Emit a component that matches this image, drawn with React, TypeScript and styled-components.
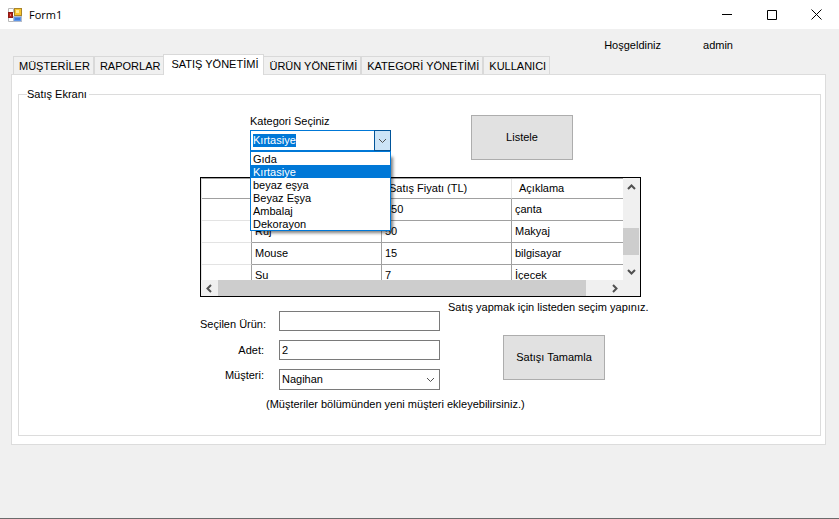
import React, { useEffect, useRef } from "react";
import styled, { createGlobalStyle } from "styled-components";

const GlobalStyle = createGlobalStyle`
  *, *::before, *::after { box-sizing: border-box; }
  html, body, #root { height: 100%; }
  body {
    margin: 0;
    background: #f0f0f0;
    color: #000;
    font: 11px/13px "Liberation Sans", Arial, sans-serif;
  }
  button, input, select { font: inherit; color: inherit; border-radius: 0; }
`;

const Window = styled.div`
  min-height: 100%;
  display: flex;
  flex-direction: column;
  border-bottom: 1px solid #6b6b6b;
`;

const TitleBar = styled.header`
  display: flex;
  align-items: center;
  height: 29px;
  padding-left: 8px;
  background: #fff;
`;

const Title = styled.h1`
  flex: 1;
  margin: 0 0 0 6px;
  font: 400 11px/16px "Open Sans", sans-serif;
`;

const CaptionButton = styled.button`
  display: grid;
  place-items: center;
  width: 45px;
  height: 28px;
  padding: 0;
  border: 0;
  background: transparent;
`;

const UserBar = styled.div`
  display: flex;
  justify-content: flex-end;
  gap: 42px;
  padding: 10px 106px 1px 0;
`;

const Tabs = styled.nav`
  display: flex;
  align-items: flex-end;
  height: 21px;
  margin: 0 13px;
`;

const Tab = styled.button<{ $active?: boolean }>`
  height: ${(p) => (p.$active ? 21 : 18)}px;
  margin: 0 ${(p) => (p.$active ? -1 : 0)}px ${(p) => (p.$active ? -1 : 0)}px ${(p) => (p.$active ? -1 : 0)}px;
  padding: ${(p) => (p.$active ? "0 5px 2px 7px" : "1px 3px 0 5px")};
  border: 1px solid #d9d9d9;
  border-bottom: 0;
  background: ${(p) => (p.$active ? "#fff" : "#f0f0f0")};
  white-space: nowrap;
  position: relative;
  z-index: ${(p) => (p.$active ? 1 : 0)};
  & + & { border-left-width: ${(p) => (p.$active ? 1 : 0)}px; }
`;

const Page = styled.main`
  margin: 0 13px 0 11px;
  padding: 13px 4px 8px 6px;
  border: 1px solid #dcdcdc;
  background: #fff;
`;

const Group = styled.fieldset`
  min-width: 0;
  min-height: 348px;
  margin: 0;
  padding: 14px 0 0 181px;
  border: 1px solid #dcdcdc;
`;

const Legend = styled.legend`
  margin-left: -173px;
  padding: 0 2px 0 0;
`;

const PickRow = styled.div`
  display: flex;
  align-items: flex-start;
  gap: 80px;
  padding-left: 50px;
`;

const Combo = styled.div`
  position: relative;
  width: 141px;
`;

const ComboLabel = styled.label`
  display: block;
  padding-bottom: 2px;
`;

const ComboBox = styled.div`
  display: flex;
  height: 21px;
  border: 1px solid #0078d7;
  background: #fff;
`;

const ComboInput = styled.input`
  flex: 1;
  min-width: 0;
  padding: 0 2px;
  border: 0;
  outline: 0;
  &::selection { background: #0078d7; color: #fff; }
`;

const ComboToggle = styled.button`
  display: grid;
  place-items: center;
  width: 17px;
  margin: -1px;
  padding: 0;
  border: 1px solid #005499;
  background: #cce4f7;
`;

const Options = styled.ul`
  position: absolute;
  z-index: 2;
  top: 100%;
  left: 0;
  right: 0;
  margin: 0;
  padding: 0;
  border: 1px solid #0078d7;
  background: #fff;
  box-shadow: 4px 4px 3px -2px rgba(0, 0, 0, 0.5);
  list-style: none;
`;

const Option = styled.li<{ $on: boolean }>`
  height: 13px;
  padding: 1px 2px 0;
  line-height: 13px;
  background: ${(p) => (p.$on ? "#0078d7" : "transparent")};
  color: ${(p) => (p.$on ? "#fff" : "#000")};
`;

const PushButton = styled.button`
  width: 102px;
  height: 45px;
  border: 1px solid #adadad;
  background: #e1e1e1;
`;

const DataGrid = styled.div`
  display: grid;
  grid-template-columns: minmax(0, 1fr) 17px;
  grid-template-rows: 102px 16px;
  width: 441px;
  max-width: 100%;
  margin-top: 17px;
  border: 1px solid #000;
`;

const Viewport = styled.div`
  overflow: hidden;
  border-top: 1px solid #a0a0a0;
  border-left: 1px solid #e3e3e3;
`;

const Table = styled.table`
  width: 100%;
  table-layout: fixed;
  border-spacing: 0;
  text-align: left;
`;

const HeadCell = styled.th<{ $width?: number }>`
  width: ${(p) => (p.$width ? `${p.$width}px` : "auto")};
  height: 20px;
  padding: 0 7px;
  border-right: 1px solid #e5e5e5;
  border-bottom: 1px solid #a0a0a0;
  font-weight: 400;
  &:last-child { border-right: 0; }
`;

const RowHead = styled.th`
  padding: 0;
  border-right: 1px solid #a0a0a0;
  border-bottom: 1px solid #e3e3e3;
`;

const Cell = styled.td`
  height: 22px;
  padding: 0 3px;
  border-right: 1px solid #a0a0a0;
  border-bottom: 1px solid #a0a0a0;
  &:last-child { border-right: 0; }
`;

const VerticalBar = styled.div`
  display: grid;
  grid-template-rows: 19px 31px 27px 8px 17px;
  padding-right: 1px;
  background: #f0f0f0;
`;

const HorizontalBar = styled.div`
  grid-column: 1 / -1;
  display: grid;
  grid-template-columns: 17px minmax(0, 1fr) 20px 17px 17px;
  background: #f0f0f0;
`;

const ScrollArrow = styled.button`
  display: grid;
  place-items: center;
  padding: 0;
  border: 0;
  background: transparent;
`;

const Thumb = styled.div`
  background: #cdcdcd;
`;

const SaleRow = styled.div`
  display: flex;
  align-items: flex-start;
  gap: 8px;
`;

const Fields = styled.div`
  display: grid;
  grid-template-columns: 64px 161px;
  column-gap: 15px;
  row-gap: 9px;
  padding-top: 14px;
`;

const FieldLabel = styled.label<{ $align: "start" | "center" | "end" }>`
  align-self: ${(p) => p.$align};
  text-align: right;
  white-space: nowrap;
`;

const TextBox = styled.input`
  min-width: 0;
  height: 20px;
  padding: 0 2px;
  border: 1px solid #7a7a7a;
  background: #fff;
`;

const SelectWrap = styled.div`
  display: grid;
  align-items: center;
  & > * { grid-area: 1 / 1; }
  & > svg { justify-self: end; margin-right: 5px; pointer-events: none; }
`;

const SelectBox = styled.select`
  appearance: none;
  height: 21px;
  padding: 0 2px;
  border: 1px solid #7a7a7a;
  background: #fff;
`;

const SaleSide = styled.div`
  display: flex;
  flex-direction: column;
  align-items: flex-start;
  gap: 21px;
  padding-top: 4px;
  & > button { margin-left: 55px; }
`;

const Note = styled.p`
  margin: 0;
  white-space: nowrap;
`;

const Hint = styled(Note)`
  padding: 8px 0 0 66px;
`;

const arrows = {
  down: "M1 3 L4.5 6.5 L8 3",
  up: "M1 6 L4.5 2.5 L8 6",
  left: "M6 1 L2.5 4.5 L6 8",
  right: "M3 1 L6.5 4.5 L3 8",
};

function Arrow({ to, weight = 1 }: { to: keyof typeof arrows; weight?: number }) {
  return (
    <svg width="9" height="9" viewBox="0 0 9 9" fill="none" stroke="#505050" strokeWidth={weight} aria-hidden="true">
      <path d={arrows[to]} />
    </svg>
  );
}

function FormIcon() {
  return (
    <svg width="15" height="14" viewBox="0 0 15 14" aria-hidden="true">
      <path d="M0.5 0.5h5v4h-5zM0.5 9.5h5v4h-5z" fill="#fff" stroke="#b8b8b8" />
      <rect x="5.5" y="8.5" width="8" height="5" fill="#5f97ea" stroke="#b4bccb" />
      <rect x="7" y="10" width="5" height="2" fill="#3f78d8" />
      <rect x="0.5" y="4.5" width="4" height="5" fill="#b32018" stroke="#8d1a14" />
      <rect x="2" y="6" width="1" height="2" fill="#ee8578" />
      <rect x="6.5" y="0.5" width="7" height="7" fill="#f7c52f" stroke="#a8842a" />
      <rect x="8" y="2" width="3" height="3" fill="#ffe795" />
    </svg>
  );
}

const tabs = ["MÜŞTERİLER", "RAPORLAR", "SATIŞ YÖNETİMİ", "ÜRÜN YÖNETİMİ", "KATEGORİ YÖNETİMİ", "KULLANICI"];
const categories = ["Gıda", "Kırtasiye", "beyaz eşya", "Beyaz Eşya", "Ambalaj", "Dekorayon"];
const products = [
  ["", "350", "çanta"],
  ["Ruj", "50", "Makyaj"],
  ["Mouse", "15", "bilgisayar"],
  ["Su", "7", "İçecek"],
];

export default function App() {
  const category = useRef<HTMLInputElement>(null);
  useEffect(() => {
    category.current?.focus();
    category.current?.select();
  }, []);

  return (
    <>
      <GlobalStyle />
      <Window>
        <TitleBar>
          <FormIcon />
          <Title>Form1</Title>
          <CaptionButton aria-label="Simge durumuna küçült">
            <svg width="10" height="11" stroke="#000"><path d="M0 5.5h10" /></svg>
          </CaptionButton>
          <CaptionButton aria-label="Ekranı kapla">
            <svg width="10" height="10" fill="none" stroke="#000"><path d="M.5 .5h9v9h-9z" /></svg>
          </CaptionButton>
          <CaptionButton aria-label="Kapat">
            <svg width="11" height="11" stroke="#000"><path d="M.5 .5l10 10M10.5 .5l-10 10" /></svg>
          </CaptionButton>
        </TitleBar>
        <UserBar>
          <span>Hoşgeldiniz</span>
          <span>admin</span>
        </UserBar>
        <Tabs role="tablist">
          {tabs.map((t, i) => (
            <Tab key={t} role="tab" aria-selected={i === 2} $active={i === 2}>{t}</Tab>
          ))}
        </Tabs>
        <Page>
          <Group>
            <Legend>Satış Ekranı</Legend>
            <PickRow>
              <Combo>
                <ComboLabel htmlFor="category">Kategori Seçiniz</ComboLabel>
                <ComboBox>
                  <ComboInput
                    id="category"
                    ref={category}
                    role="combobox"
                    aria-expanded
                    aria-controls="category-list"
                    autoComplete="off"
                    defaultValue="Kırtasiye"
                  />
                  <ComboToggle aria-label="Kategoriler"><Arrow to="down" /></ComboToggle>
                </ComboBox>
                <Options id="category-list" role="listbox">
                  {categories.map((c) => (
                    <Option key={c} role="option" aria-selected={c === "Kırtasiye"} $on={c === "Kırtasiye"}>{c}</Option>
                  ))}
                </Options>
              </Combo>
              <PushButton>Listele</PushButton>
            </PickRow>
            <DataGrid>
              <Viewport>
                <Table>
                  <thead>
                    <tr>
                      <HeadCell $width={50} />
                      <HeadCell $width={130} />
                      <HeadCell $width={130}>Satış Fiyatı (TL)</HeadCell>
                      <HeadCell>Açıklama</HeadCell>
                    </tr>
                  </thead>
                  <tbody>
                    {products.map(([name, price, note]) => (
                      <tr key={note}>
                        <RowHead />
                        <Cell>{name}</Cell>
                        <Cell>{price}</Cell>
                        <Cell>{note}</Cell>
                      </tr>
                    ))}
                  </tbody>
                </Table>
              </Viewport>
              <VerticalBar>
                <ScrollArrow aria-label="Yukarı"><Arrow to="up" weight={2} /></ScrollArrow>
                <span />
                <Thumb />
                <span />
                <ScrollArrow aria-label="Aşağı"><Arrow to="down" weight={2} /></ScrollArrow>
              </VerticalBar>
              <HorizontalBar>
                <ScrollArrow aria-label="Sola"><Arrow to="left" weight={2} /></ScrollArrow>
                <Thumb />
                <span />
                <ScrollArrow aria-label="Sağa"><Arrow to="right" weight={2} /></ScrollArrow>
              </HorizontalBar>
            </DataGrid>
            <SaleRow>
              <Fields>
                <FieldLabel $align="end" htmlFor="product">Seçilen Ürün:</FieldLabel>
                <TextBox id="product" />
                <FieldLabel $align="center" htmlFor="amount">Adet:</FieldLabel>
                <TextBox id="amount" defaultValue="2" />
                <FieldLabel $align="start" htmlFor="customer">Müşteri:</FieldLabel>
                <SelectWrap>
                  <SelectBox id="customer" defaultValue="Nagihan">
                    <option>Nagihan</option>
                  </SelectBox>
                  <Arrow to="down" />
                </SelectWrap>
              </Fields>
              <SaleSide>
                <Note>Satış yapmak için listeden seçim yapınız.</Note>
                <PushButton>Satışı Tamamla</PushButton>
              </SaleSide>
            </SaleRow>
            <Hint>(Müşteriler bölümünden yeni müşteri ekleyebilirsiniz.)</Hint>
          </Group>
        </Page>
      </Window>
    </>
  );
}
